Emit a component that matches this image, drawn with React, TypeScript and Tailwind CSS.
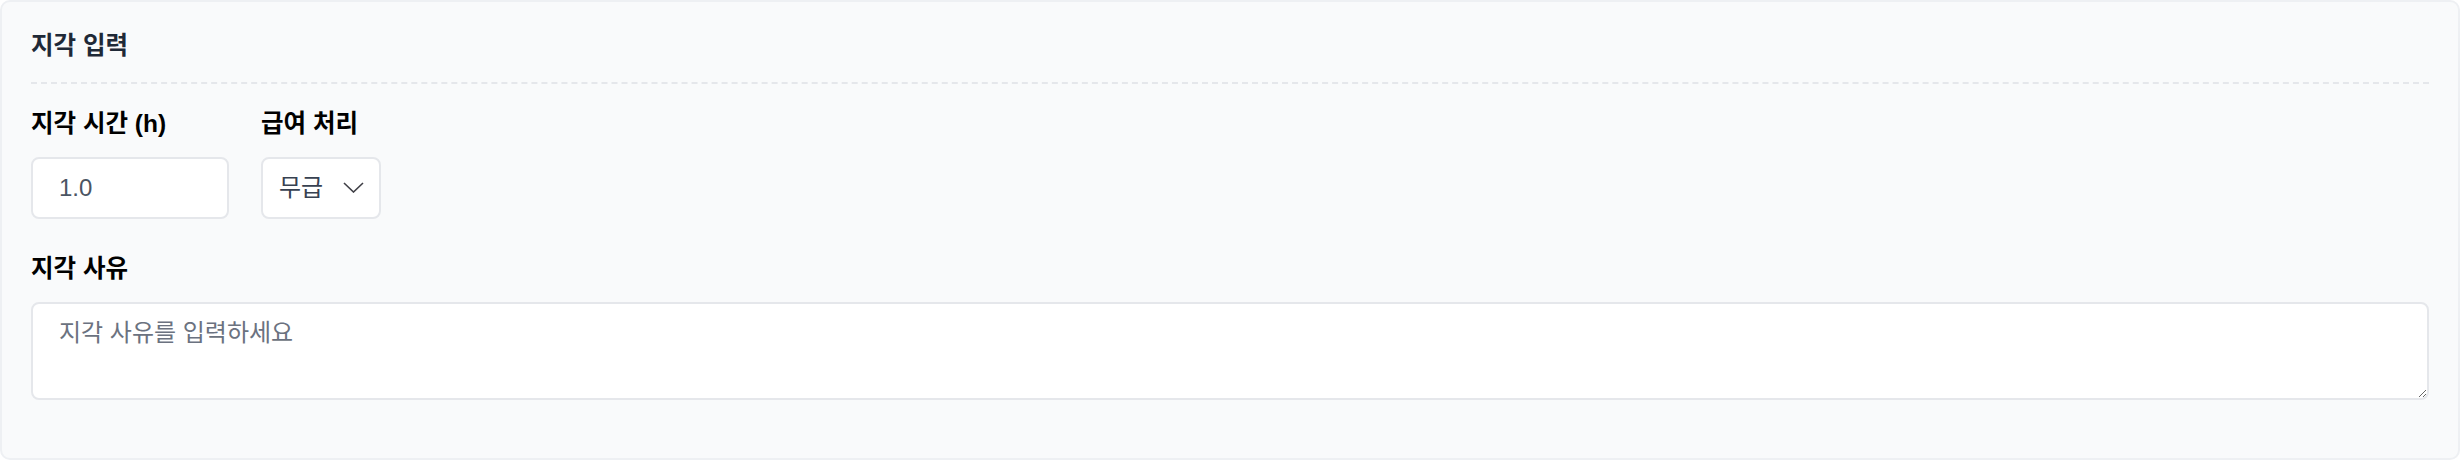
const App = () => {
  return (
    <div className="w-full h-[460px] bg-white font-['Liberation_Sans','Noto_Sans_CJK_KR',sans-serif]">
      <div className="h-[460px] w-full rounded-[10px] border-2 border-[#eef0f3] bg-[#f9fafb] px-[29px] pt-[29px]">
        <h2 className="text-[24.5px] font-bold leading-[29px] text-[#1f2937] pb-[22px] border-b-2 border-dashed border-[#e5e7eb]">
          지각 입력
        </h2>

        <div className="mt-[25px] flex gap-[32px]">
          <div className="w-[198px]">
            <label className="block text-[24.5px] font-bold leading-[29px] text-black mb-[19px] whitespace-nowrap">
              지각 시간 (h)
            </label>
            <input
              type="text"
              defaultValue="1.0"
              className="h-[62px] w-full rounded-[8px] border-2 border-[#e5e7eb] bg-white px-[26px] text-[24px] text-[#4b5563] outline-none"
            />
          </div>
          <div>
            <label className="block text-[24.5px] font-bold leading-[29px] text-black mb-[19px] whitespace-nowrap">
              급여 처리
            </label>
            <div className="relative w-[120px]">
              <select
                defaultValue="무급"
                className="h-[62px] w-full appearance-none rounded-[8px] border-2 border-[#e5e7eb] bg-white pl-[16px] text-[24px] text-[#374151] outline-none"
              >
                <option value="무급">무급</option>
                <option value="유급">유급</option>
              </select>
              <svg
                className="pointer-events-none absolute right-[17px] top-[25px]"
                width="21"
                height="11"
                viewBox="0 0 21 11"
                fill="none"
              >
                <polyline points="1,1 10.5,10 20,1" stroke="#3f3f46" strokeWidth="1.6" />
              </svg>
            </div>
          </div>
        </div>

        <div className="mt-[35px]">
          <label className="block text-[24.5px] font-bold leading-[29px] text-black mb-[19px]">
            지각 사유
          </label>
          <textarea
            placeholder="지각 사유를 입력하세요"
            className="block h-[98px] w-full rounded-[8px] border-2 border-[#e5e7eb] bg-white px-[26px] pt-[12px] text-[24px] leading-[33px] text-[#374151] placeholder:text-[#6b7280] outline-none"
          />
        </div>
      </div>
    </div>
  );
};

export default App;
